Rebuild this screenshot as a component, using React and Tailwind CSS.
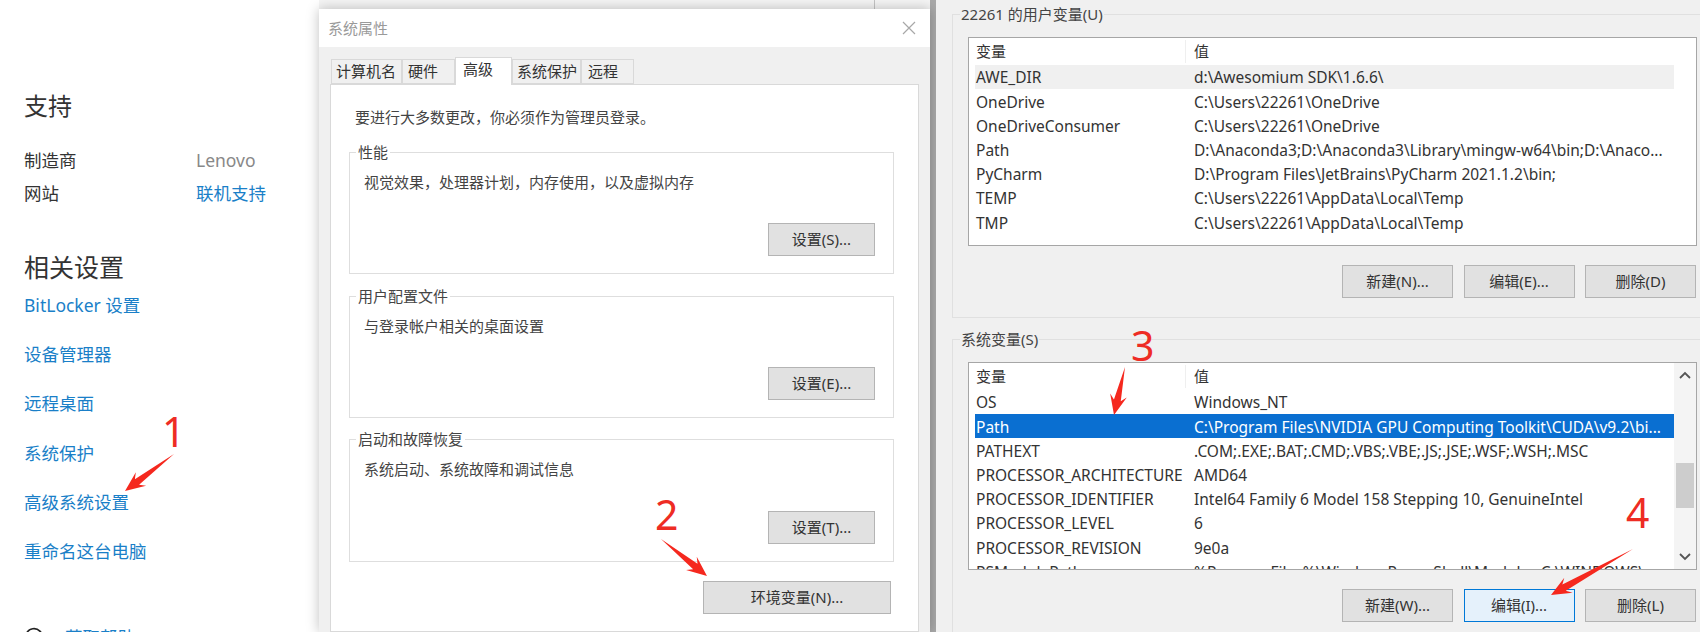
import { MessageCircleQuestion } from 'lucide-react';

const userVars = [
  ['AWE_DIR', 'd:\\Awesomium SDK\\1.6.6\\'],
  ['OneDrive', 'C:\\Users\\22261\\OneDrive'],
  ['OneDriveConsumer', 'C:\\Users\\22261\\OneDrive'],
  ['Path', 'D:\\Anaconda3;D:\\Anaconda3\\Library\\mingw-w64\\bin;D:\\Anaco...'],
  ['PyCharm', 'D:\\Program Files\\JetBrains\\PyCharm 2021.1.2\\bin;'],
  ['TEMP', 'C:\\Users\\22261\\AppData\\Local\\Temp'],
  ['TMP', 'C:\\Users\\22261\\AppData\\Local\\Temp'],
];

const systemVars = [
  ['OS', 'Windows_NT'],
  ['Path', 'C:\\Program Files\\NVIDIA GPU Computing Toolkit\\CUDA\\v9.2\\bi...'],
  ['PATHEXT', '.COM;.EXE;.BAT;.CMD;.VBS;.VBE;.JS;.JSE;.WSF;.WSH;.MSC'],
  ['PROCESSOR_ARCHITECTURE', 'AMD64'],
  ['PROCESSOR_IDENTIFIER', 'Intel64 Family 6 Model 158 Stepping 10, GenuineIntel'],
  ['PROCESSOR_LEVEL', '6'],
  ['PROCESSOR_REVISION', '9e0a'],
  ['PSModulePath', '%ProgramFiles%\\WindowsPowerShell\\Modules;C:\\WINDOWS\\...'],
];

const links = ['BitLocker 设置', '设备管理器', '远程桌面', '系统保护', '高级系统设置', '重命名这台电脑'];

const tabs = [
  { label: '计算机名', cls: 'w-[71px] pl-[4px]' },
  { label: '硬件', cls: 'w-[53px] pl-[5px]' },
  { label: '高级', cls: 'w-[57px] pl-[7px]', active: true },
  { label: '系统保护', cls: 'w-[69px] pl-[4px]' },
  { label: '远程', cls: 'w-[53px] pl-[6px]' },
];

const groups = [
  { title: '性能', desc: '视觉效果，处理器计划，内存使用，以及虚拟内存', button: '设置(S)...', height: 'h-[122px]' },
  { title: '用户配置文件', desc: '与登录帐户相关的桌面设置', button: '设置(E)...', height: 'h-[122px]' },
  { title: '启动和故障恢复', desc: '系统启动、系统故障和调试信息', button: '设置(T)...', height: 'h-[123px]' },
];

// red call-outs drawn on top of the screenshot
const marks = [
  { n: '1', cls: 'left-[162px] top-[407px]' },
  { n: '2', cls: 'left-[655px] top-[490px]' },
  { n: '3', cls: 'left-[1131px] top-[321px]' },
  { n: '4', cls: 'left-[1626px] top-[488px]' },
];

const arrows = [
  [174, 454, 125, 491],
  [661, 539, 707, 576],
  [1125, 367, 1114, 415],
  [1633, 549, 1551, 595],
];

function arrowPoints([x1, y1, x2, y2]) {
  const len = Math.hypot(x2 - x1, y2 - y1);
  const ux = (x2 - x1) / len;
  const uy = (y2 - y1) / len;
  const at = (along, side) => `${x2 - ux * along - uy * side},${y2 - uy * along + ux * side}`;
  return [
    at(len, 0),
    at(15, 3.5),
    at(20, 8.5),
    at(0, 0),
    at(20, -8.5),
    at(15, -3.5),
  ].join(' ');
}

function WinButton({ children, className = '' }) {
  return (
    <button className={`h-[33px] border border-[#b4b4b4] bg-[#e1e1e1] text-[15px] text-[#333] ${className}`}>
      {children}
    </button>
  );
}

function GroupBox({ title, desc, button, height }) {
  return (
    <div className={`relative flex w-[545px] flex-col justify-between border border-[#dedede] pb-[17px] pl-[14px] pr-[18px] pt-[19px] ${height}`}>
      <span className="absolute -top-[11px] left-[6px] bg-white px-[2px] text-[15px] leading-5 text-[#444]">{title}</span>
      <p className="text-[15px] leading-5 text-[#444]">{desc}</p>
      <WinButton className="w-[107px] self-end">{button}</WinButton>
    </div>
  );
}

function VarList({ rows, selected, scroll, height }) {
  return (
    <div className={`relative flex w-[729px] flex-col overflow-hidden border border-[#a6a6a6] bg-white pl-[6px] ${height}`}>
      <div className="flex h-[27px] w-[699px] shrink-0 items-center text-[15px] text-[#333]">
        <span className="w-[211px] border-r border-[#efefef] pl-[1px]">变量</span>
        <span className="pl-[8px]">值</span>
      </div>
      {rows.map(([name, value], i) => (
        <div
          key={name}
          className={`flex h-[24.2px] w-[699px] shrink-0 items-center pt-[2px] text-[15.5px] ${
            i === selected ? 'bg-[#0a6fd1] text-white' : scroll || i !== 0 ? 'text-[#333]' : 'bg-[#f0f0f0] text-[#333]'
          }`}
        >
          <span className="w-[211px] whitespace-nowrap pl-[1px]">{name}</span>
          <span className="whitespace-nowrap pl-[8px]">{value}</span>
        </div>
      ))}
      {scroll && (
        <div className="absolute bottom-0 right-0 top-0 flex w-[22px] flex-col items-center justify-between bg-[#f4f4f4] py-[8px] text-[#555]">
          <svg width="12" height="8" viewBox="0 0 12 8" fill="none" stroke="currentColor" strokeWidth="1.8"><path d="M1 7l5-5 5 5" /></svg>
          <div className="absolute left-[2px] top-[100px] h-[45px] w-[18px] bg-[#cdcdcd]" />
          <svg width="12" height="8" viewBox="0 0 12 8" fill="none" stroke="currentColor" strokeWidth="1.8"><path d="M1 1l5 5 5-5" /></svg>
        </div>
      )}
    </div>
  );
}

function VarGroup({ title, children, className = '' }) {
  return (
    <div className={`relative w-[760px] border-l border-t border-[#e0e0e0] pl-[15px] ${className}`}>
      <span className="absolute -top-[11px] left-[7px] bg-[#f0f0f0] px-[1px] text-[15px] leading-5 text-[#444]">{title}</span>
      {children}
    </div>
  );
}

export default function App() {
  return (
    <div className="relative flex h-[632px] w-[1700px] overflow-hidden bg-white font-['Noto_Sans','Noto_Sans_CJK_SC',sans-serif]">
      {/* settings page */}
      <aside className="w-[319px] shrink-0 pl-[24px] pt-[90px]">
        <h2 className="text-[24px] leading-8 text-[#333]">支持</h2>
        <div className="mt-[22px] grid grid-cols-[172px_1fr] text-[17.5px] leading-[33px]">
          <span className="text-[#333]">制造商</span>
          <span className="text-[#888]">Lenovo</span>
          <span className="text-[#333]">网站</span>
          <span className="text-[#1a7fc8]">联机支持</span>
        </div>
        <h2 className="mt-[41px] text-[25px] leading-8 text-[#333]">相关设置</h2>
        <div className="mt-[10px] flex flex-col gap-[25.2px]">
          {links.map((link) => (
            <a key={link} className="text-[17.5px] leading-6 text-[#1a7fc8]">{link}</a>
          ))}
        </div>
        <div className="mt-[62px] flex h-6 items-center gap-[21px]">
          <MessageCircleQuestion size={20} className="text-[#222]" />
          <a className="text-[17.5px] leading-6 text-[#1a7fc8]">获取帮助</a>
        </div>
      </aside>

      {/* system properties dialog */}
      <section className="flex w-[617px] shrink-0 flex-col border-r-[6px] border-[#a9a9a9]">
        <div className="flex h-[9px] shrink-0 justify-end bg-[#f5f5f5] pr-[55px]">
          <div className="w-px bg-[#c4c4c4]" />
        </div>
        <div className="flex min-h-0 flex-1 flex-col overflow-hidden bg-[#f0f0f0] shadow-[0_0_12px_rgba(0,0,0,0.25)]">
          <div className="flex h-[38px] shrink-0 items-center justify-between bg-white pl-[9px] pr-[14px]">
            <span className="text-[15px] text-[#9a9a9a]">系统属性</span>
            <svg width="14" height="14" viewBox="0 0 14 14" stroke="#a8a8a8" strokeWidth="1.2"><path d="M1 1l12 12M13 1L1 13" /></svg>
          </div>
          <div className="mt-[12px] flex h-[25px] shrink-0 items-end pl-[12px]">
            {tabs.map((tab) => (
              <div
                key={tab.label}
                className={`flex items-center border border-[#d9d9d9] text-[15px] text-[#333] ${tab.cls} ${
                  tab.active ? 'relative z-10 -mb-px h-[28px] border-b-0 bg-white pb-[5px]' : 'h-[25px] bg-[#f0f0f0]'
                }`}
              >
                {tab.label}
              </div>
            ))}
          </div>
          <div className="ml-[11px] flex w-[589px] min-h-0 flex-1 flex-col border border-[#d9d9d9] bg-white pl-[18px] pt-[22px]">
            <p className="pl-[6px] text-[15px] leading-5 text-[#444]">要进行大多数更改，你必须作为管理员登录。</p>
            <div className="mt-[25px] flex flex-col gap-[21.5px]">
              {groups.map((group) => (
                <GroupBox key={group.title} {...group} />
              ))}
            </div>
            <WinButton className="ml-[354px] mt-[19px] w-[188px] shrink-0">环境变量(N)...</WinButton>
          </div>
        </div>
      </section>

      {/* environment variables dialog */}
      <section className="flex-1 bg-[#f0f0f0] pl-[16px] pt-[14px]">
        <VarGroup title="22261 的用户变量(U)" className="h-[304px] border-b pt-[22px]">
          <VarList rows={userVars} height="h-[209px]" />
          <div className="mt-[19px] flex w-[728px] justify-end gap-[10.5px]">
            <WinButton className="w-[111px]">新建(N)...</WinButton>
            <WinButton className="w-[111px]">编辑(E)...</WinButton>
            <WinButton className="w-[111px]">删除(D)</WinButton>
          </div>
        </VarGroup>
        <VarGroup title="系统变量(S)" className="mt-[21px] h-[300px] pt-[22px]">
          <VarList rows={systemVars} selected={1} scroll height="h-[208px]" />
          <div className="mt-[19px] flex w-[728px] justify-end gap-[10.5px]">
            <WinButton className="w-[111px]">新建(W)...</WinButton>
            <WinButton className="w-[111px] !border-[#0078d7] !bg-[#e5f1fb]">编辑(I)...</WinButton>
            <WinButton className="w-[111px]">删除(L)</WinButton>
          </div>
        </VarGroup>
      </section>

      {/* annotations */}
      <svg className="pointer-events-none absolute left-0 top-0" width="1700" height="632">
        {arrows.map((a) => (
          <polygon key={a.join()} points={arrowPoints(a)} fill="#f5281e" />
        ))}
      </svg>
      {marks.map((m) => (
        <span key={m.n} className={`absolute text-[41px] leading-[48px] text-[#ee2c24] ${m.cls}`}>{m.n}</span>
      ))}
    </div>
  );
}
